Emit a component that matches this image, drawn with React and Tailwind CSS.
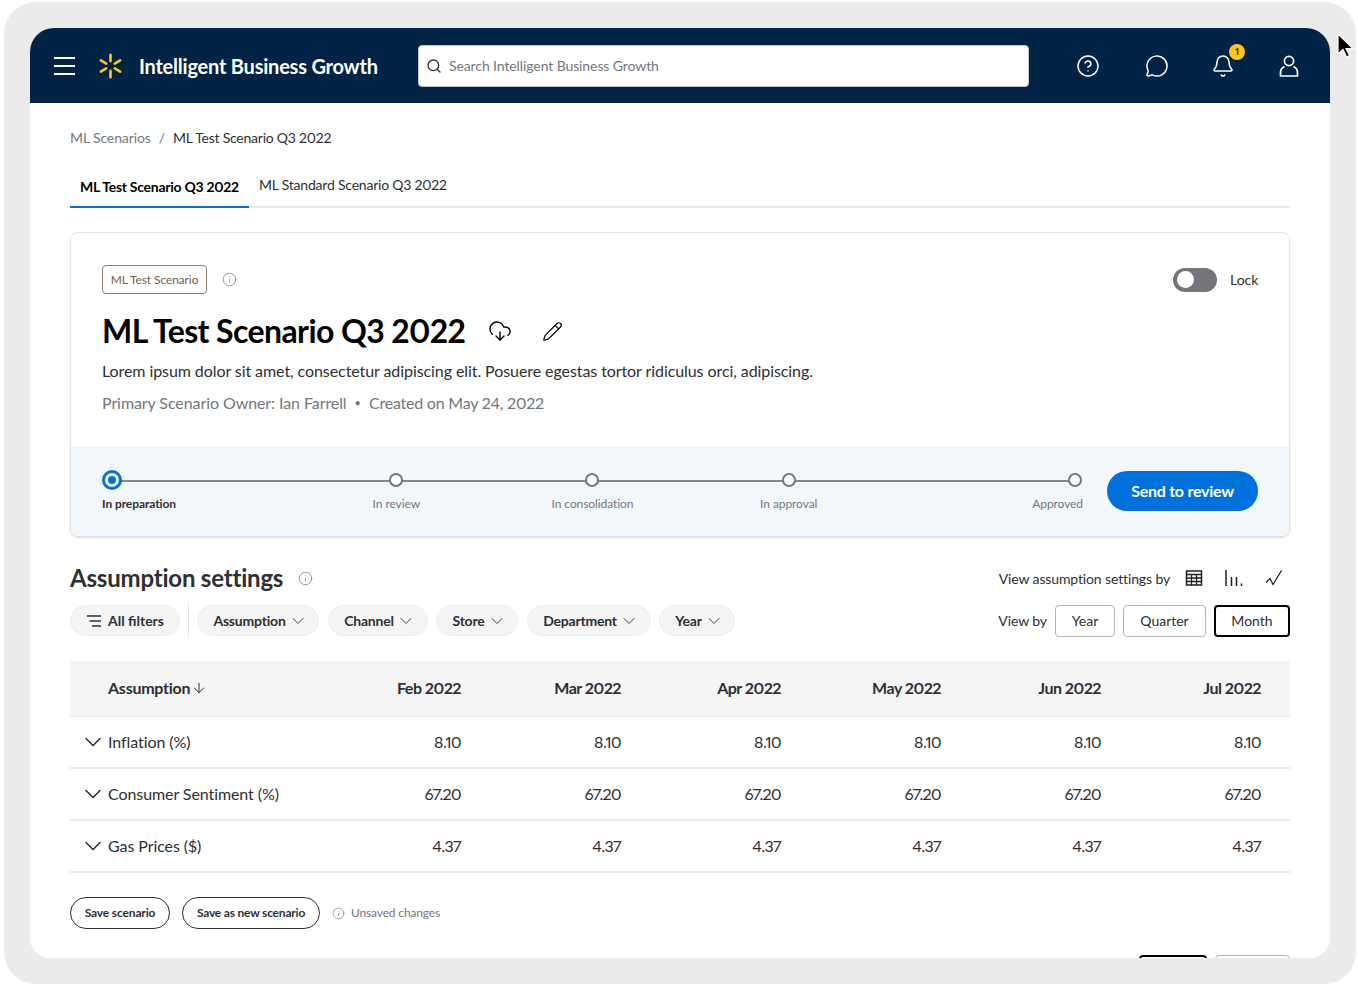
import { Search, CircleHelp, MessageCircle, Bell, Info, CloudDownload, Pencil, ChevronDown, ArrowDown } from 'lucide-react';

const months = ['Feb 2022', 'Mar 2022', 'Apr 2022', 'May 2022', 'Jun 2022', 'Jul 2022'];

const rows = [
  { name: 'Inflation (%)', value: '8.10' },
  { name: 'Consumer Sentiment (%)', value: '67.20' },
  { name: 'Gas Prices ($)', value: '4.37' },
];

const steps = ['In preparation', 'In review', 'In consolidation', 'In approval', 'Approved'];

const filters = [
  { label: 'Assumption', width: 'w-[122px]' },
  { label: 'Channel', width: 'w-[100px]' },
  { label: 'Store', width: 'w-[82px]' },
  { label: 'Department', width: 'w-[124px]' },
  { label: 'Year', width: 'w-[76px]' },
];

const Spark = () => (
  <svg width="28" height="28" viewBox="0 0 28 28" fill="#ffc220">
    {[0, 60, 120, 180, 240, 300].map((angle) => (
      <rect key={angle} x="12.5" y="0" width="3" height="10" rx="1.5" transform={`rotate(${angle} 14 14)`} />
    ))}
  </svg>
);

const UserIcon = () => (
  <svg width="22" height="24" viewBox="0 0 22 24" fill="none" stroke="white" strokeWidth="1.7">
    <circle cx="11" cy="7" r="4.6" />
    <path d="M6.5 12.5C4 13.5 2.5 16 2.5 19v3h17v-3c0-3-1.500-5.500-4-6.500" strokeLinejoin="round" />
  </svg>
);

const TableIcon = () => (
  <svg width="18" height="16" viewBox="0 0 18 16" fill="none" stroke="#1f2023" strokeWidth="1.3">
    <rect x="1.500" y="1" width="15" height="14" strokeWidth="1.500" />
    <path d="M1.500 4.500h15M1.500 8h15M1.500 11.500h15M6.500 4.500V15M11.500 4.500V15" />
  </svg>
);

const BarsIcon = () => (
  <svg width="20" height="18" viewBox="0 0 20 18" fill="none" stroke="#1f2023" strokeWidth="1.500">
    <path d="M2 1v16M7.500 8v9M12.500 8v9M17.500 14.500v2.500" />
  </svg>
);

const LineIcon = () => (
  <svg width="18" height="16" viewBox="0 0 18 16" fill="none" stroke="#1f2023" strokeWidth="1.300">
    <path d="M1 12.500l4-4 3 6L16.500 0.500" />
  </svg>
);

const FilterLinesIcon = () => (
  <svg width="16" height="12" viewBox="0 0 16 12" fill="none" stroke="#2e2f32" strokeWidth="1.300">
    <path d="M1 1h14M3.500 6h11.500M6 11h9" />
  </svg>
);

const App = () => {
  return (
    <div className="relative h-[988px] w-[1358px] overflow-hidden bg-white pl-1 pt-[2px] font-['Lato',sans-serif] text-[#2e2f32] proportional-nums">
      <div className="h-[982px] w-[1352px] rounded-[32px] bg-[#ebebeb] pl-[26px] pt-[26px]">
        <div className="h-[930px] w-[1300px] overflow-hidden rounded-b-[20px] rounded-t-[24px] bg-white">
          {/* top bar */}
          <header className="flex h-[75px] items-center bg-[#012345] pl-6 text-white">
            <div className="flex w-[21px] flex-col gap-[6px]">
              <div className="h-[2px] bg-white" />
              <div className="h-[2px] bg-white" />
              <div className="h-[2px] bg-white" />
            </div>
            <div className="ml-[23px] flex w-[25px] justify-center">
              <Spark />
            </div>
            <div className="ml-4 w-[279px] text-[20px] font-bold leading-6 tracking-[-0.22px]">Intelligent Business Growth</div>
            <div className="flex h-[42px] w-[611px] items-center gap-[7px] rounded border border-[#c8c8c8] bg-white pl-[7px] text-[14px] tracking-[-0.1px] text-[#74767c]">
              <Search size={16} className="text-[#2e2f32]" />
              Search Intelligent Business Growth
            </div>
            <div className="ml-[47px] flex items-center">
              <CircleHelp size={24} strokeWidth={1.500} />
              <MessageCircle size={24} strokeWidth={1.500} className="ml-[45px]" />
              <div className="relative ml-[42px]">
                <Bell size={24} strokeWidth={1.500} />
                <span className="absolute -right-[10px] -top-[10px] flex h-4 w-4 items-center justify-center rounded-full bg-[#ffc220] text-[10px] font-bold text-[#2e2f32]">1</span>
              </div>
              <div className="ml-[43px]">
                <UserIcon />
              </div>
            </div>
          </header>

          <main className="px-10">
            <div className="flex h-[71px] items-center pb-[2px] text-[14px]">
              <span className="tracking-[-0.12px] text-[#74767c]">ML Scenarios</span>
              <span className="mx-2 text-[#74767c]">/</span>
              <span className="tracking-[-0.23px]">ML Test Scenario Q3 2022</span>
            </div>

            <div className="flex h-[34px] border-b-2 border-[#e8e8e8] text-[14px]">
              <div className="-mb-[2px] h-[34px] w-[179px] whitespace-nowrap border-b-2 border-[#0071dc] pl-[10px] pt-[2px] font-bold tracking-[-0.27px] text-black">ML Test Scenario Q3 2022</div>
              <div className="ml-[10px] tracking-[-0.21px]">ML Standard Scenario Q3 2022</div>
            </div>

            {/* scenario card */}
            <section className="mt-6 overflow-hidden rounded-lg border border-[#e3e3e3] shadow-[0_1px_2px_rgba(0,0,0,0.15)]">
              <div className="h-[213px] pl-[31px] pr-[31px] pt-8">
                <div className="flex items-center justify-between">
                  <div className="flex items-center gap-[15px]">
                    <span className="flex h-[29px] w-[105px] items-center justify-center rounded border border-[#9b7a60] text-[12px] tracking-[-0.1px] text-[#7c5a3e]">ML Test Scenario</span>
                    <Info size={15} strokeWidth={1.200} className="text-[#74767c]" />
                  </div>
                  <div className="flex items-center gap-[13px] text-[14px]">
                    <div className="flex h-[24px] w-[44px] items-center rounded-full bg-[#74767c] pl-[4px]">
                      <div className="h-[17px] w-[17px] rounded-full bg-white" />
                    </div>
                    <span className="w-[28px]">Lock</span>
                  </div>
                </div>
                <div className="mt-[17px] flex items-center">
                  <h1 className="w-[363px] whitespace-nowrap text-[32px] font-bold leading-10 tracking-[-0.6px] text-black">ML Test Scenario Q3 2022</h1>
                  <CloudDownload size={24} strokeWidth={1.400} className="ml-[23px] text-black" />
                  <Pencil size={21} strokeWidth={1.400} className="ml-[30px] text-black" />
                </div>
                <p className="mt-2 text-[16px] leading-6 tracking-[-0.08px]">Lorem ipsum dolor sit amet, consectetur adipiscing elit. Posuere egestas tortor ridiculus orci, adipiscing.</p>
                <p className="mt-2 flex items-center text-[16px] leading-6 text-[#74767c]">
                  <span className="tracking-[-0.08px]">Primary Scenario Owner: Ian Farrell</span>
                  <span className="mx-2 text-[11px]">•</span>
                  <span className="tracking-[-0.22px]">Created on May 24, 2022</span>
                </p>
              </div>

              <div className="flex h-[90px] items-start bg-[#f2f7fc] pl-[31px] pr-[31px] pt-6">
                <div className="relative grid w-[981px] grid-cols-5">
                  <div className="absolute left-2 right-2 top-[10px] h-[2px] bg-[#85878b]" />
                  {steps.map((step, i) => (
                    <div
                      key={step}
                      className={`relative flex flex-col ${i === 0 ? 'items-start' : i === 4 ? 'items-end' : 'items-center'}`}
                    >
                      {i === 0 ? (
                        <div className="flex h-[20px] w-[20px] items-center justify-center rounded-full border-[3px] border-[#0071dc] bg-white">
                          <div className="h-2 w-2 rounded-full bg-[#0071dc]" />
                        </div>
                      ) : (
                        <div className={`my-[3px] h-[14px] w-[14px] rounded-full border-2 border-[#74767c] bg-white ${i === 4 ? 'mr-[1px]' : ''}`} />
                      )}
                      <span className={`mt-[6px] text-[12px] leading-4 tracking-[-0.08px] ${i === 0 ? 'font-bold' : 'text-[#74767c]'}`}>{step}</span>
                    </div>
                  ))}
                </div>
                <button className="ml-6 mt-px flex h-10 w-[151px] items-center justify-center rounded-full bg-[#0071dc] text-[16px] font-bold tracking-[-0.25px] text-white">Send to review</button>
              </div>
            </section>

            {/* assumption settings */}
            <section className="mt-[25px] flex items-center justify-between">
              <div className="flex items-center gap-[15px]">
                <h2 className="text-[24px] font-bold leading-8 tracking-[-0.2px]">Assumption settings</h2>
                <Info size={15} strokeWidth={1.200} className="text-[#74767c]" />
              </div>
              <div className="flex items-center text-[14px]">
                <span className="tracking-[-0.13px]">View assumption settings by</span>
                <span className="ml-[15px]"><TableIcon /></span>
                <span className="ml-[21px]"><BarsIcon /></span>
                <span className="ml-[21px] mr-[7px]"><LineIcon /></span>
              </div>
            </section>

            <div className="mt-[10px] flex items-center justify-between">
              <div className="flex items-center text-[14px] font-bold">
                <div className="flex h-[31px] w-[110px] items-center justify-center gap-[6px] rounded-full border border-[#eeeeee] bg-[#f5f5f5]">
                  <FilterLinesIcon />
                  All filters
                </div>
                <div className="mx-2 h-[33px] w-px bg-[#e3e3e3]" />
                <div className="flex gap-[8.5px]">
                  {filters.map((filter) => (
                    <div key={filter.label} className={`flex h-[31px] items-center justify-center gap-[2px] rounded-full border border-[#eeeeee] bg-[#f5f5f5] pl-[5px] tracking-[-0.2px] ${filter.width}`}>
                      {filter.label}
                      <ChevronDown size={20} strokeWidth={1.100} />
                    </div>
                  ))}
                </div>
              </div>
              <div className="flex items-center gap-2 text-[14px]">
                <span className="tracking-[-0.1px]">View by</span>
                <div className="flex h-[32px] w-[60px] items-center justify-center rounded border border-[#b5b5b5]">Year</div>
                <div className="flex h-[32px] w-[83px] items-center justify-center rounded border border-[#b5b5b5]">Quarter</div>
                <div className="flex h-[32px] w-[76px] items-center justify-center rounded border-2 border-black">Month</div>
              </div>
            </div>

            {/* table */}
            <div className="mt-[24px] text-[16px]">
              <div className="grid h-[56px] grid-cols-[232px_repeat(6,160px)] items-center border-b border-[#e8e8e8] bg-[#f5f5f5] pb-px font-bold">
                <div className="flex items-center gap-px pl-[38px] tracking-[-0.25px]">
                  Assumption
                  <ArrowDown size={16} strokeWidth={1.500} />
                </div>
                {months.map((month) => (
                  <div key={month} className="pr-px text-right tracking-[-0.5px]">{month}</div>
                ))}
              </div>
              {rows.map((row) => (
                <div key={row.name} className="grid h-[52px] grid-cols-[232px_repeat(6,160px)] items-center border-b-2 border-[#e8e8e8]">
                  <div className="flex items-center gap-px whitespace-nowrap pl-[9px] tracking-[-0.08px]">
                    <ChevronDown size={28} strokeWidth={1.300} />
                    {row.name}
                  </div>
                  {months.map((month) => (
                    <div key={month} className="pr-px text-right tracking-[-0.6px]">{row.value}</div>
                  ))}
                </div>
              ))}
            </div>

            <div className="mt-6 flex items-center text-[12px]">
              <button className="h-[32px] w-[100px] rounded-full border border-[#2e2f32] font-bold tracking-[-0.15px]">Save scenario</button>
              <button className="ml-3 h-[32px] w-[138px] rounded-full border border-[#2e2f32] font-bold tracking-[-0.2px]">Save as new scenario</button>
              <Info size={13} strokeWidth={1.200} className="ml-3 text-[#74767c]" />
              <span className="ml-[6px] tracking-[-0.15px] text-[#74767c]">Unsaved changes</span>
            </div>

            <div className="mt-[26px] flex justify-end gap-2">
              <div className="h-[32px] w-[68px] rounded border-2 border-black" />
              <div className="h-[32px] w-[75px] rounded border border-[#b5b5b5]" />
            </div>
          </main>
        </div>
      </div>

      {/* mouse pointer from the capture */}
      <svg className="absolute left-[1337px] top-[33px]" width="18" height="26" viewBox="0 0 18 26">
        <path d="M1 1v20l5-4.500 3.500 7.500 3-1.500L9 15.500h7z" fill="black" stroke="white" strokeWidth="1.200" />
      </svg>
    </div>
  );
};

export default App;
